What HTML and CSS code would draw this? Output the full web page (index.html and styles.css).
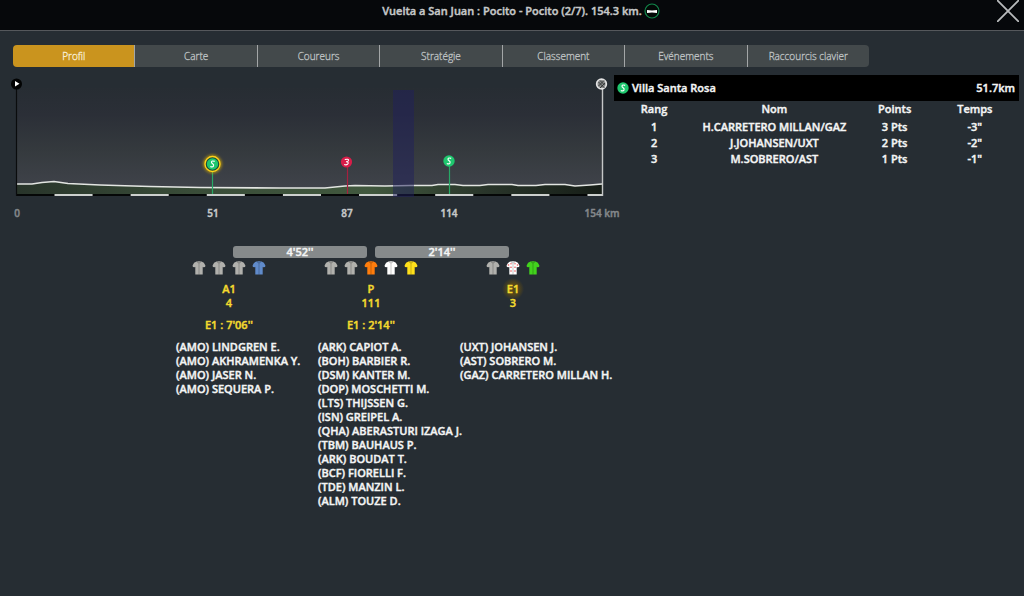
FILE: index.html
```html
<!DOCTYPE html>
<html lang="fr">
<head>
<meta charset="utf-8">
<title>Vuelta a San Juan</title>
<link rel="stylesheet" href="styles.css">
</head>
<body>
<svg class="sprites" aria-hidden="true">
  <symbol id="jersey" viewBox="0 0 14 14">
    <path d="M4.500 .6Q7 -.2 9.500 .6Q12.300 1.200 13.400 4.600L13.100 6L11 6.300L10.700 5.800V13.500H3.300V5.800L3 6.300L.9 6L.6 4.600Q1.700 1.200 4.500 .6Z"/>
    <path d="M7 1.500V13.500M5 1L7 2L9 1" fill="none" stroke="#000" stroke-opacity=".28" stroke-width=".8"/>
  </symbol>
  <symbol id="sprint" viewBox="0 0 12 12">
    <circle cx="6" cy="6" r="5.700" fill="#1fc76e"/>
    <path d="M8.200 3.400Q5.200 2.300 5 4.100Q4.900 5 6.100 5.700Q7.500 6.500 7 7.900Q6.200 9.600 3.800 8.500" fill="none" stroke="#fff" stroke-width="1.200"/>
  </symbol>
</svg>

<header class="topbar">
  <h1 class="title">Vuelta a San Juan : Pocito - Pocito (2/7). 154.3 km.
    <svg class="stage-type" viewBox="0 0 16 16" aria-hidden="true"><circle cx="8" cy="8" r="7" fill="#030806" stroke="#12864a" stroke-width="1.200"/><path d="M3 7Q8 7.800 13 7V10Q8 9.200 3 10Z" fill="#fff"/></svg>
  </h1>
  <button class="close" aria-label="Fermer"><svg viewBox="0 0 22 22"><path d="M0 0L22 22M22 0L0 22" stroke="#b9bbbd" stroke-width="1.800"/></svg></button>
</header>

<main class="page">
  <nav class="tabs">
    <button class="tab active">Profil</button>
    <button class="tab">Carte</button>
    <button class="tab">Coureurs</button>
    <button class="tab">Stratégie</button>
    <button class="tab">Classement</button>
    <button class="tab">Evénements</button>
    <button class="tab">Raccourcis clavier</button>
  </nav>

  <div class="content">
    <section class="race">
      <svg class="profile" viewBox="12 75 602 150" role="img" aria-label="Profil de l'étape">
        <defs>
          <linearGradient id="sky" x1="0" y1="0" x2="0" y2="1"><stop offset="0" stop-color="#272d33"/><stop offset=".25" stop-color="#2b2f37"/><stop offset=".6" stop-color="#353a3e"/><stop offset="1" stop-color="#41444c"/></linearGradient>
          <linearGradient id="ground" x1="0" y1="0" x2="1" y2="0"><stop offset="0" stop-color="#28342a"/><stop offset=".3" stop-color="#394c38"/><stop offset=".6" stop-color="#41583e"/><stop offset=".8" stop-color="#29352a"/><stop offset="1" stop-color="#161d17"/></linearGradient>
          <filter id="glow" x="-50%" y="-50%" width="200%" height="200%"><feGaussianBlur stdDeviation="1.500"/></filter>
        </defs>
        <rect x="17" y="88" width="585" height="106" fill="url(#sky)"/>
        <path fill="url(#ground)" d="M17 184L32 184L42 182.500L54 181.500L68 183.500L100 185L150 186.500L200 187.500L280 188L325 188L345 186L355 185.500L385 186L410 185.500L432 185.500L438 184.500L455 184.500L463 185.500L480 185.500L488 184.500L512 184.500L518 185.500L536 185.500L545 184.500L565 184.500L575 186L590 185L602 184V194H17Z"/>
        <path fill="none" stroke="#e3e5e2" stroke-width="1.600" d="M17 184L32 184L42 182.500L54 181.500L68 183.500L100 185L150 186.500L200 187.500L280 188L325 188L345 186L355 185.500L385 186L410 185.500L432 185.500L438 184.500L455 184.500L463 185.500L480 185.500L488 184.500L512 184.500L518 185.500L536 185.500L545 184.500L565 184.500L575 186L590 185L602 184"/>
        <path d="M16.500 195H602" stroke="#050707" stroke-width="2.200"/>
        <path d="M54.500 195H602" stroke="#cdd0ce" stroke-width="2.200" stroke-dasharray="38.070"/>
        <rect x="393" y="90" width="21" height="107" fill="#20205c" fill-opacity=".5"/>
        <path d="M16.500 88V196" stroke="#0a0c0d" stroke-width="1.200"/>
        <path d="M602.500 88V196" stroke="#c5c7c8" stroke-width="1.400"/>
        <circle cx="16.500" cy="84" r="5.500" fill="#020303"/><path d="M15 81L19.500 83.800L15 86.500Z" fill="#fff"/>
        <circle cx="601.500" cy="84" r="5.700" fill="#e4e4e4"/><circle cx="601.500" cy="84" r="4" fill="#8a8c8c"/>
        <path d="M598.500 82L601.500 85L604.500 88M600 80.500L604.500 85M598.500 86L604 80.500M600 88L605 83" stroke="#303333" stroke-width=".9" fill="none"/>
        <path d="M212.500 170V194M449.500 166V194" stroke="#27a866" stroke-width="1.200"/>
        <path d="M347.500 167V194" stroke="#a5213f" stroke-width="1.200"/>
        <circle cx="212.500" cy="164" r="8" fill="none" stroke="#d8ac00" stroke-width="2" filter="url(#glow)"/>
        <circle cx="212.500" cy="164" r="7.500" fill="#174a3c" stroke="#ffd21a" stroke-width="1.400"/>
        <use href="#sprint" x="206.500" y="158" width="12" height="12"/>
        <use href="#sprint" x="443" y="155" width="12" height="12"/>
        <circle cx="346.500" cy="162" r="5.600" fill="#d81d49"/>
        <path d="M344.800 159.500Q348.600 158.600 348.600 160.200Q348.400 161.700 346 161.700Q348.500 161.800 348.100 163.400Q347 165.600 344.200 164.500" fill="none" stroke="#fff" stroke-width="1.100"/>
        <g class="axis">
          <text class="muted" x="17" y="217">0</text><text x="213" y="217">51</text><text x="347" y="217">87</text><text x="449" y="217">114</text><text class="muted" x="602" y="217">154 km</text>
        </g>
      </svg>

      <div class="situation">
        <div class="gaps"><div class="gap">4'52''</div><div class="gap">2'14''</div></div>
        <div class="groups">
          <section class="group">
            <div class="jerseys"><svg class="grey"><use href="#jersey"/></svg><svg class="grey"><use href="#jersey"/></svg><svg class="grey"><use href="#jersey"/></svg><svg class="blue"><use href="#jersey"/></svg></div>
            <h2 class="name">A1</h2>
            <p class="count">4</p>
            <p class="delay">E1 : 7'06''</p>
            <ul class="riders"><li>(AMO) LINDGREN E.</li><li>(AMO) AKHRAMENKA Y.</li><li>(AMO) JASER N.</li><li>(AMO) SEQUERA P.</li></ul>
          </section>
          <section class="group">
            <div class="jerseys"><svg class="grey"><use href="#jersey"/></svg><svg class="grey"><use href="#jersey"/></svg><svg class="orange"><use href="#jersey"/></svg><svg class="white"><use href="#jersey"/></svg><svg class="yellow"><use href="#jersey"/></svg></div>
            <h2 class="name">P</h2>
            <p class="count">111</p>
            <p class="delay">E1 : 2'14''</p>
            <ul class="riders"><li>(ARK) CAPIOT A.</li><li>(BOH) BARBIER R.</li><li>(DSM) KANTER M.</li><li>(DOP) MOSCHETTI M.</li><li>(LTS) THIJSSEN G.</li><li>(ISN) GREIPEL A.</li><li>(QHA) ABERASTURI IZAGA J.</li><li>(TBM) BAUHAUS P.</li><li>(ARK) BOUDAT T.</li><li>(BCF) FIORELLI F.</li><li>(TDE) MANZIN L.</li><li>(ALM) TOUZE D.</li></ul>
          </section>
          <section class="group">
            <div class="jerseys"><svg class="grey"><use href="#jersey"/></svg><svg class="white" viewBox="0 0 14 14"><use href="#jersey"/><g fill="#e65558"><circle cx="2.500" cy="4" r=".8"/><circle cx="5" cy="2.800" r=".7"/><circle cx="9" cy="2.800" r=".7"/><circle cx="11.500" cy="4" r=".8"/><circle cx="5" cy="6.200" r=".8"/><circle cx="9" cy="6.200" r=".8"/><circle cx="5" cy="10" r=".8"/><circle cx="9" cy="10" r=".8"/></g></svg><svg class="green"><use href="#jersey"/></svg></div>
            <h2 class="name current">E1</h2>
            <p class="count">3</p>
            <p class="delay"></p>
            <ul class="riders"><li>(UXT) JOHANSEN J.</li><li>(AST) SOBRERO M.</li><li>(GAZ) CARRETERO MILLAN H.</li></ul>
          </section>
        </div>
      </div>
    </section>

    <aside class="result">
      <h2 class="place"><svg class="badge" aria-hidden="true"><use href="#sprint"/></svg><span>Villa Santa Rosa</span><span class="distance">51.7km</span></h2>
      <table class="ranking">
        <thead><tr><th class="c-rank">Rang</th><th class="c-name">Nom</th><th class="c-points">Points</th><th>Temps</th></tr></thead>
        <tbody>
          <tr><td>1</td><td>H.CARRETERO MILLAN/GAZ</td><td>3 Pts</td><td>-3"</td></tr>
          <tr><td>2</td><td>J.JOHANSEN/UXT</td><td>2 Pts</td><td>-2"</td></tr>
          <tr><td>3</td><td>M.SOBRERO/AST</td><td>1 Pts</td><td>-1"</td></tr>
        </tbody>
      </table>
    </aside>
  </div>
</main>
</body>
</html>
```
FILE: styles.css
```css
* { box-sizing: border-box; }
body {
  margin: 0;
  min-height: 100vh;
  background: #262d33;
  color: #f4f5f5;
  font: 600 11px/14px "Open Sans", "Noto Sans", sans-serif;
  -webkit-text-stroke: 0.4px currentColor;
}
h1, h2, p, ul { margin: 0; padding: 0; font-size: inherit; font-weight: inherit; list-style: none; }
button { border: 0; padding: 0; font: inherit; color: inherit; background: none; }
.sprites { display: none; }

.topbar {
  display: grid;
  grid-template-columns: 27px 1fr 27px;
  height: 31px;
  background: #06080b;
  border-bottom: 1px solid #55585c;
}
.title {
  grid-column: 2;
  display: flex;
  justify-content: center;
  gap: 2px;
  height: 22px;
  padding-left: 18px;
  line-height: 22px;
  color: #c6c8c9;
}
.stage-type { width: 16px; height: 16px; margin-top: 3px; }
.close { display: block; width: 22px; height: 22px; }
.close svg { display: block; width: 22px; height: 22px; }

.page { padding: 14px 5px 16px 12px; }
.tabs {
  display: flex;
  width: 85%;
  height: 22px;
  margin-left: 1px;
  border-radius: 4px;
  overflow: hidden;
}
.tab {
  flex: 1;
  background: #43494b;
  color: #bfc2c3;
  font-weight: 300;
  font-size: 10px;
  -webkit-text-stroke: 0.3px currentColor;
}
.tab + .tab { border-left: 1px solid #a3a6a7; }
.tab.active { background: #ca941e; color: #f8eed8; }

.content {
  display: grid;
  grid-template-columns: minmax(0, 602fr) minmax(0, 405fr);
  align-items: start;
  margin-top: 8px;
}
.profile { display: block; width: 100%; overflow: visible; }
.axis { font-size: 10px; text-anchor: middle; fill: #c8cacb; -webkit-text-stroke: 0; stroke: #c8cacb; stroke-width: 0.4px; }
.axis .muted { fill: #84888b; stroke: #84888b; }

.situation { margin: 21px 30px 0 146px; }
.gaps { display: flex; padding: 0 16.66%; }
.gap {
  flex: 1;
  margin: 0 4px;
  height: 12px;
  line-height: 12px;
  border-radius: 3px;
  background: #868a8b;
  text-align: center;
}
.groups { display: grid; grid-template-columns: repeat(3, minmax(0, 1fr)); margin-top: 3px; }
.group { text-align: center; color: #f4da2e; }
.jerseys { display: flex; justify-content: center; gap: 6px; margin-bottom: 7px; }
.jerseys svg { width: 14px; height: 14px; }
.grey { fill: #b1b1ad; }
.blue { fill: #608bcb; }
.orange { fill: #ff7d0c; }
.white { fill: #fff; }
.yellow { fill: #ffe01a; }
.green { fill: #42d31d; }
.current {
  margin: -4px 0;
  padding: 4px 0;
  background: radial-gradient(circle 11px, #55471a 50%, transparent 100%);
}
.delay { height: 14px; margin-top: 8px; }
.riders {
  margin-top: 8px;
  padding-left: 18px;
  color: #f4f5f5;
  text-align: left;
  white-space: nowrap;
}

.place {
  display: flex;
  align-items: center;
  gap: 3px;
  height: 26px;
  padding: 0 4px 0 3px;
  background: #000;
}
.badge { width: 12px; height: 12px; }
.distance { margin-left: auto; }
.ranking { width: 99%; margin-top: 1px; table-layout: fixed; border-collapse: collapse; }
.ranking th, .ranking td { height: 16px; padding: 0; font-weight: inherit; text-align: center; white-space: nowrap; }
.ranking th { height: 17px; vertical-align: top; }
.c-rank, .c-points { width: 20%; }
.c-name { width: 40%; }
```
